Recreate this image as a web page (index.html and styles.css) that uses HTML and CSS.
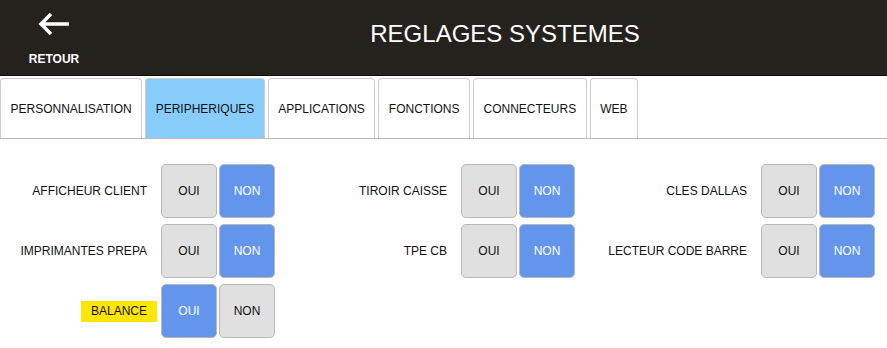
FILE: index.html
```html
<!DOCTYPE html>
<html lang="fr">
<head>
    <meta charset="UTF-8">
    <title>Reglages systemes</title>
    <link rel="stylesheet" href="styles.css">
</head>
<body>
    <div class="header">
        <div class="back">
            <svg class="arrow" width="32" height="24" viewBox="0 0 32 24">
                <path d="M31 12 H4 M13 2 L3 12 L13 22" fill="none" stroke="#fff" stroke-width="3.5"/>
            </svg>
            <div class="back-label">RETOUR</div>
        </div>
        <div class="title">REGLAGES SYSTEMES</div>
    </div>

    <div class="tabs">
        <div class="tab">PERSONNALISATION</div>
        <div class="tab active">PERIPHERIQUES</div>
        <div class="tab">APPLICATIONS</div>
        <div class="tab">FONCTIONS</div>
        <div class="tab">CONNECTEURS</div>
        <div class="tab">WEB</div>
    </div>

    <div class="settings">
        <div class="setting">
            <div class="label"><span>AFFICHEUR CLIENT</span></div>
            <div class="btn">OUI</div>
            <div class="btn on">NON</div>
        </div>
        <div class="setting">
            <div class="label"><span>TIROIR CAISSE</span></div>
            <div class="btn">OUI</div>
            <div class="btn on">NON</div>
        </div>
        <div class="setting">
            <div class="label"><span>CLES DALLAS</span></div>
            <div class="btn">OUI</div>
            <div class="btn on">NON</div>
        </div>
        <div class="setting">
            <div class="label"><span>IMPRIMANTES PREPA</span></div>
            <div class="btn">OUI</div>
            <div class="btn on">NON</div>
        </div>
        <div class="setting">
            <div class="label"><span>TPE CB</span></div>
            <div class="btn">OUI</div>
            <div class="btn on">NON</div>
        </div>
        <div class="setting">
            <div class="label"><span>LECTEUR CODE BARRE</span></div>
            <div class="btn">OUI</div>
            <div class="btn on">NON</div>
        </div>
        <div class="setting">
            <div class="label"><span class="highlight">BALANCE</span></div>
            <div class="btn on">OUI</div>
            <div class="btn">NON</div>
        </div>
    </div>
</body>
</html>
```

FILE: styles.css
```css
body {
    margin: 0;
    background: #fff;
    color: #111;
    font-family: 'Liberation Sans', Arial, sans-serif;
    font-size: 12px;
}

.header {
    display: flex;
    height: 75px;
    background: #25221e;
    border-bottom: 1px solid #0f0d0b;
    color: #fff;
}

.back {
    width: 108px;
    display: flex;
    flex-direction: column;
    align-items: center;
}

.arrow {
    display: block;
    margin-top: 12px;
}

.back-label {
    margin-top: 16px;
    font-weight: bold;
    font-size: 12px;
    line-height: 14px;
}

.title {
    flex: 1;
    text-align: center;
    padding-left: 15px;
    padding-top: 20px;
    font-size: 24px;
    line-height: 28px;
}

.tabs {
    display: flex;
    margin-top: 2px;
    border-bottom: 1px solid #bbb;
}

.tab {
    height: 59px;
    display: flex;
    align-items: center;
    padding: 0 9.5px;
    margin-right: 3px;
    border: 1px solid #ccc;
    border-bottom: none;
    border-radius: 4px 4px 0 0;
    background: #fff;
    white-space: nowrap;
}

.tab.active {
    background: #88cdf9;
}

.settings {
    display: grid;
    grid-template-columns: repeat(3, 300px);
    row-gap: 6px;
    margin-top: 25px;
}

.setting {
    display: flex;
    align-items: center;
}

.label {
    width: 157px;
    display: flex;
    justify-content: flex-end;
    margin-right: 4px;
    white-space: nowrap;
}

.label span {
    padding: 3px 10px;
    line-height: 15px;
}

.label .highlight {
    background: #ffe600;
}

.btn {
    width: 54px;
    height: 52px;
    display: flex;
    align-items: center;
    justify-content: center;
    margin-right: 2px;
    border: 1px solid #b8b8b8;
    border-radius: 5px;
    background: #e0e0e0;
    color: #111;
}

.btn.on {
    background: #6495ed;
    color: #fff;
}
```
